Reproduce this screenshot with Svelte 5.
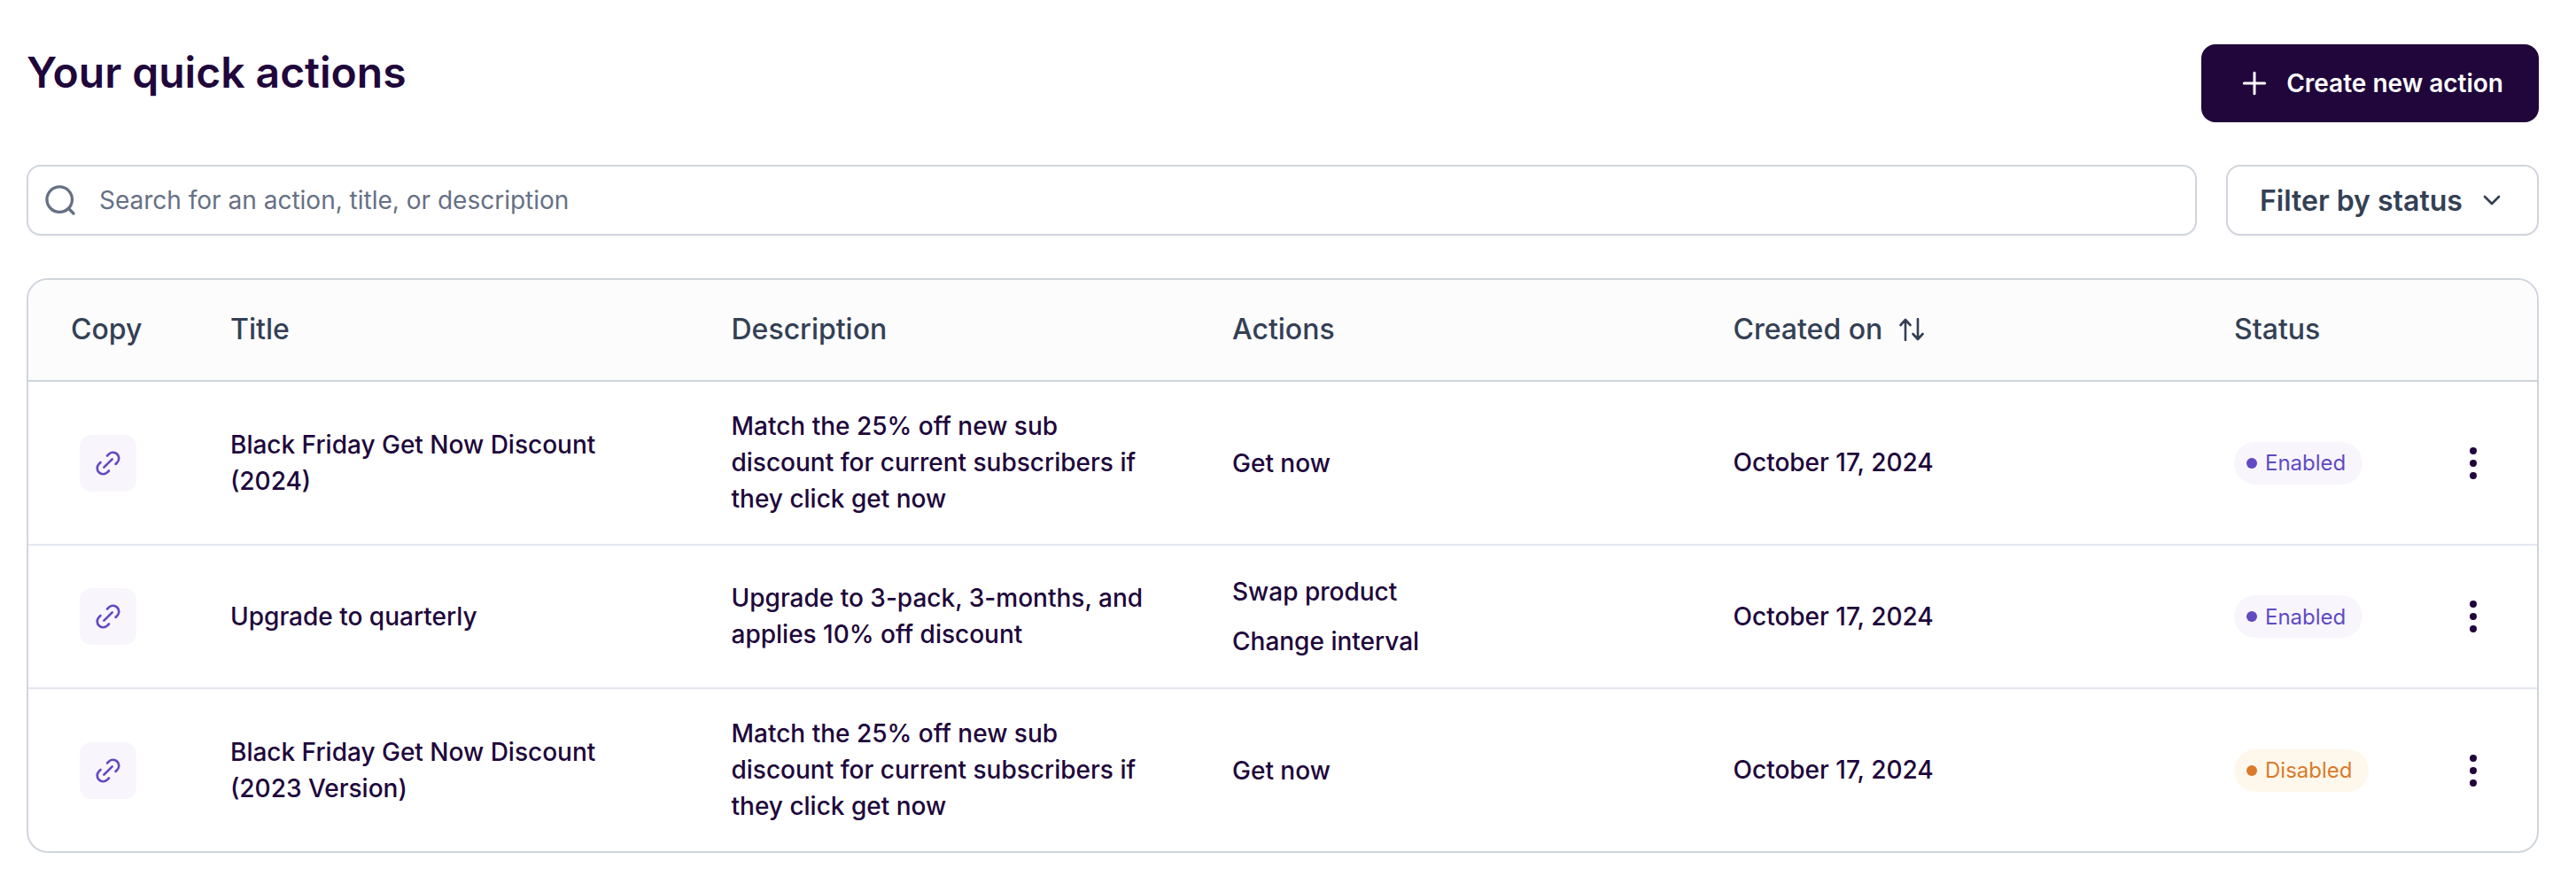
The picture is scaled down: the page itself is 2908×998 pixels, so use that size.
<script>
  const rows = [
    { title: 'Black Friday Get Now Discount (2024)', desc: 'Match the 25% off new sub discount for current subscribers if they click get now', actions: ['Get now'], status: 'Enabled' },
    { title: 'Upgrade to quarterly', desc: 'Upgrade to 3-pack, 3-months, and applies 10% off discount', actions: ['Swap product', 'Change interval'], status: 'Enabled' },
    { title: 'Black Friday Get Now Discount (2023 Version)', desc: 'Match the 25% off new sub discount for current subscribers if they click get now', actions: ['Get now'], status: 'Disabled' },
  ];
</script>

<div class="page">
  <div class="head">
    <h1>Your quick actions</h1>
    <button class="create">
      <svg width="40" height="40" viewBox="0 0 24 24" fill="none" stroke="currentColor" stroke-width="1.8" stroke-linecap="round"><path d="M12 5v14M5 12h14" /></svg>
      Create new action
    </button>
  </div>

  <div class="tools">
    <div class="search">
      <svg width="38" height="38" viewBox="0 0 24 24" fill="none" stroke="#667085" stroke-width="2.1" stroke-linecap="round"><circle cx="11.5" cy="11.5" r="9" /><path d="M18.500 18.500l3 3" /></svg>
      <span>Search for an action, title, or description</span>
    </div>
    <button class="filter">
      Filter by status
      <svg width="32" height="32" viewBox="0 0 24 24" fill="none" stroke="currentColor" stroke-width="2" stroke-linecap="round" stroke-linejoin="round"><path d="M6 9l6 6 6-6" /></svg>
    </button>
  </div>

  <div class="table">
    <div class="row header">
      <div class="copy-h">Copy</div>
      <div>Title</div>
      <div>Description</div>
      <div>Actions</div>
      <div class="sort">Created on
        <svg width="28" height="26" viewBox="0 0 28 26" fill="none" stroke="currentColor" stroke-width="2.6" stroke-linecap="round" stroke-linejoin="round"><path d="M7 25V2M1.500 8L7 2l5.500 6M21 1v23M15.500 18l5.500 6 5.500-6" /></svg>
      </div>
      <div>Status</div>
      <div></div>
    </div>
    {#each rows as r}
      <div class="row">
        <div class="copy-c">
          <span class="link">
            <svg width="32" height="32" viewBox="0 0 24 24" fill="none" stroke="#5f4bc3" stroke-width="2" stroke-linecap="round" stroke-linejoin="round"><path d="M12.700 18.360l-1.410 1.420a5 5 0 0 1-7.070-7.070l1.410-1.420M18.360 12.700l1.420-1.410a5 5 0 0 0-7.070-7.070l-1.420 1.410M8.500 15.500l7-7" /></svg>
          </span>
        </div>
        <div class="cell">{r.title}</div>
        <div class="cell">{r.desc}</div>
        <div class="acts">
          {#each r.actions as a}<span>{a}</span>{/each}
        </div>
        <div class="cell">October 17, 2024</div>
        <div>
          <span class="badge" class:off={r.status === 'Disabled'}><i></i>{r.status}</span>
        </div>
        <div class="more"><b></b><b></b><b></b></div>
      </div>
    {/each}
  </div>
</div>

<style>
  :global(body) {
    margin: 0;
    background: #fff;
  }
  .page {
    padding: 50px 42px 0 30px;
    font-family: Inter, "Liberation Sans", sans-serif;
    color: #20063b;
  }
  .head {
    display: flex;
    justify-content: space-between;
    align-items: flex-start;
    margin-bottom: 48px;
  }
  h1 {
    margin: 2px 0 0;
    font-size: 48px;
    line-height: 60px;
    font-weight: 600;
  }
  button {
    font-family: inherit;
    cursor: pointer;
  }
  .create {
    display: flex;
    align-items: center;
    gap: 16px;
    height: 88px;
    padding: 0 40px;
    border: 0;
    border-radius: 16px;
    background: #20063b;
    color: #fff;
    font-size: 28px;
    font-weight: 600;
    box-shadow: 0 1px 2px rgba(16, 24, 40, 0.05);
  }
  .tools {
    display: flex;
    gap: 33px;
    margin-bottom: 48px;
  }
  .search {
    flex: 1;
    display: flex;
    align-items: center;
    gap: 25px;
    box-sizing: border-box;
    height: 80px;
    padding: 0 17px;
    border: 2px solid #d0d5dd;
    border-radius: 16px;
    color: #667085;
    font-size: 28px;
    box-shadow: 0 1px 2px rgba(16, 24, 40, 0.05);
  }
  .filter {
    display: flex;
    align-items: center;
    gap: 17px;
    box-sizing: border-box;
    width: 353px;
    height: 80px;
    padding: 0 0 0 36px;
    background: #fff;
    border: 2px solid #d0d5dd;
    border-radius: 16px;
    color: #344054;
    font-size: 32px;
    font-weight: 600;
    box-shadow: 0 1px 2px rgba(16, 24, 40, 0.05);
  }
  .table {
    border: 2px solid #d0d5dd;
    border-radius: 24px;
    overflow: hidden;
  }
  .row {
    display: grid;
    grid-template-columns: 228px 565.5px 565.5px 565.5px 565.5px 198px 144px;
    align-items: center;
    padding: 30px 0;
    border-top: 2px solid #e4e7f2;
    font-size: 28px;
    font-weight: 500;
  }
  .header {
    height: 115px;
    box-sizing: border-box;
    padding: 0 0 2px;
    border-top: 0;
    border-bottom: 2px solid #d0d5dd;
    background: #fcfcfd;
    color: #344054;
    font-size: 32px;
    font-weight: 500;
  }
  .header + .row {
    border-top: 0;
  }
  .copy-h {
    padding-left: 48px;
  }
  .copy-c {
    padding-left: 58px;
  }
  .cell {
    box-sizing: border-box;
    padding-right: 80px;
    line-height: 41px;
  }
  .link {
    display: flex;
    align-items: center;
    justify-content: center;
    width: 64px;
    height: 64px;
    border-radius: 13px;
    background: #f8f5fd;
  }
  .acts {
    display: flex;
    flex-direction: column;
    gap: 12px;
    line-height: 44px;
  }
  .sort {
    display: flex;
    align-items: center;
    gap: 19px;
  }
  .badge {
    display: inline-flex;
    align-items: center;
    gap: 9px;
    height: 48px;
    padding: 0 19px 0 14px;
    border-radius: 24px;
    background: #f8f5fd;
    color: #5f4bc3;
    font-size: 24px;
    font-weight: 400;
    vertical-align: middle;
  }
  .badge i {
    width: 12px;
    height: 12px;
    border-radius: 50%;
    background: #5f4bc3;
  }
  .badge.off {
    background: #fef8ec;
    color: #d97b2b;
  }
  .badge.off i {
    background: #d97b2b;
  }
  .more {
    display: flex;
    flex-direction: column;
    align-items: center;
    gap: 6px;
  }
  .more b {
    width: 8px;
    height: 8px;
    border-radius: 50%;
    background: #20063b;
  }
</style>
